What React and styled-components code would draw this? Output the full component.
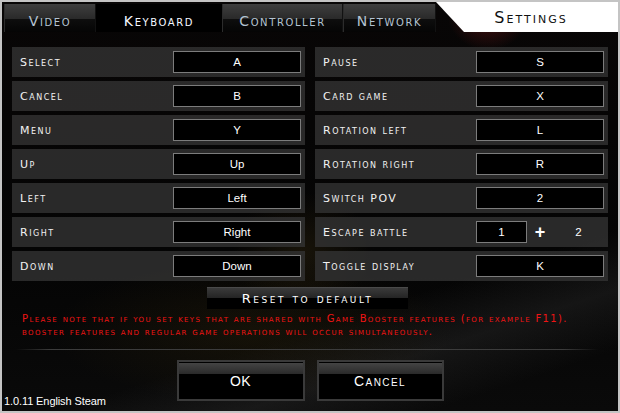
import React from "react";
import styled, { createGlobalStyle } from "styled-components";

const GlobalStyle = createGlobalStyle`
  html, body { margin: 0; padding: 0; background: #c4c4c4; }
  body { font-family: "DejaVu Sans", sans-serif; }
  *, *::before, *::after { box-sizing: border-box; }
`;

const Window = styled.div`
  width: 620px;
  height: 413px;
  border: 2px solid #c4c4c4;
  display: flex;
  flex-direction: column;
  overflow: hidden;
  background:
    radial-gradient(ellipse 40px 34px at 486px 14px, rgba(150, 30, 30, 0.45), transparent),
    radial-gradient(ellipse 70px 60px at 300px 250px, rgba(70, 55, 20, 0.3), transparent),
    radial-gradient(ellipse 200px 70px at 250px 330px, rgba(80, 60, 10, 0.2), transparent),
    linear-gradient(162deg, transparent 70%, rgba(60, 60, 60, 0.28) 80%, transparent 90%),
    linear-gradient(180deg, #080606, #040404 60%, #0a0a0a);
`;

const TabBar = styled.div`
  display: flex;
  height: 30px;
  flex: none;
  padding-left: 2px;
`;

const Tab = styled.div`
  width: ${(p) => p.$width}px;
  margin-top: 2px;
  display: flex;
  align-items: center;
  justify-content: center;
  padding-top: 5px;
  font-size: 14px;
  font-variant: small-caps;
  letter-spacing: 1.6px;
  color: ${(p) => (p.$active ? "#f4f8ff" : "#b4c3d2")};
  background: ${(p) =>
    p.$active
      ? "#000"
      : "linear-gradient(180deg, #3e3e3e 0%, #2a2a2a 52%, #0e0e0e 54%, #050505 100%)"};
  border-right: 1px solid ${(p) => (p.$active ? "#000" : "#121212")};
  border-left: 1px solid ${(p) => (p.$active ? "#000" : "#2c2c2c")};
`;

const Title = styled.div`
  flex: 1;
  display: flex;
  align-items: center;
  justify-content: center;
  padding-left: 8px;
  background: #fff;
  clip-path: polygon(0 0, 100% 0, 100% 100%, 28px 100%);
  color: #111;
  font-size: 16px;
  font-variant: small-caps;
  letter-spacing: 2px;
`;

const Grid = styled.div`
  display: grid;
  grid-template-columns: 1fr 1fr;
  grid-auto-rows: 30px;
  column-gap: 10px;
  row-gap: 4px;
  padding: 0 10px;
  margin-top: 15px;
  flex: none;
`;

const Row = styled.div`
  display: flex;
  align-items: center;
  justify-content: space-between;
  padding: 0 4px 0 8px;
  background: rgba(50, 50, 50, 0.82);
`;

const Label = styled.span`
  font-size: 11px;
  font-variant: small-caps;
  letter-spacing: 1.5px;
  color: #f2f2f2;
`;

const KeyBox = styled.div`
  width: ${(p) => p.$width || 128}px;
  height: 22px;
  border: 1px solid #7c7c7c;
  background: #000;
  display: flex;
  align-items: center;
  justify-content: center;
  font-family: "Liberation Sans", Arial, sans-serif;
  font-size: 11.5px;
  color: #fff;
`;

const Combo = styled.div`
  width: 128px;
  display: flex;
  align-items: center;
`;

const Plus = styled.span`
  width: 26px;
  text-align: center;
  font-family: "Liberation Sans", Arial, sans-serif;
  font-weight: bold;
  font-size: 18px;
  color: #fff;
`;

const ComboValue = styled.span`
  flex: 1;
  text-align: center;
  font-family: "Liberation Sans", Arial, sans-serif;
  font-size: 11.5px;
  color: #fff;
`;

const ResetWrap = styled.div`
  display: flex;
  justify-content: center;
  padding-right: 5px;
  margin-top: 6px;
  flex: none;
`;

const ResetButton = styled.button`
  width: 201px;
  height: 22px;
  padding: 0;
  border: none;
  border-top: 1px solid #4a4a4a;
  background: linear-gradient(180deg, #3a3a3a 0%, #242424 48%, #000 50%, #000 100%);
  color: #fff;
  font-family: "DejaVu Sans", sans-serif;
  font-size: 13px;
  font-variant: small-caps;
  letter-spacing: 2.5px;
  line-height: 20px;
`;

const Note = styled.p`
  margin: 3px 0 0;
  padding-left: 20px;
  flex: none;
  color: #f01414;
  font-size: 10px;
  line-height: 13px;
  font-variant: small-caps;
  letter-spacing: 1.35px;
`;

const Separator = styled.div`
  height: 1px;
  margin: 11px 20px 0 14px;
  flex: none;
  background: linear-gradient(90deg, transparent, #3c3c3c 6%, #3c3c3c 94%, transparent);
`;

const Footer = styled.div`
  flex: 1;
  margin-top: 10px;
  display: grid;
  grid-template-columns: 1fr auto 1fr;
`;

const Version = styled.span`
  align-self: end;
  padding: 0 0 4px 2px;
  font-family: "Liberation Sans", Arial, sans-serif;
  font-size: 11px;
  letter-spacing: -0.1px;
  color: #fff;
`;

const Buttons = styled.div`
  display: flex;
  gap: 12px;
  align-self: start;
`;

const DialogButton = styled.button`
  width: ${(p) => p.$width}px;
  height: 41px;
  padding: 0;
  border: 2px solid #3a3a3a;
  background:
    linear-gradient(180deg, #000 0, #000 1px, #444 1px, #2a2a2a 12px, #000 12px, #000 100%);
  color: #fff;
  font-family: "Liberation Sans", Arial, sans-serif;
  font-size: 14px;
  font-variant: small-caps;
  letter-spacing: ${(p) => p.$spacing}px;
`;

const left = [
  ["Select", "A"],
  ["Cancel", "B"],
  ["Menu", "Y"],
  ["Up", "Up"],
  ["Left", "Left"],
  ["Right", "Right"],
  ["Down", "Down"],
];

const right = [
  ["Pause", "S"],
  ["Card game", "X"],
  ["Rotation left", "L"],
  ["Rotation right", "R"],
  ["Switch POV", "2"],
  ["Escape battle", null],
  ["Toggle display", "K"],
];

const tabs = [
  ["Video", 92],
  ["Keyboard", 126, true],
  ["Controller", 121],
  ["Network", 93],
];

export default function App() {
  const rows = [];
  for (let i = 0; i < left.length; i++) {
    rows.push(
      <Row key={"l" + i}>
        <Label>{left[i][0]}</Label>
        <KeyBox>{left[i][1]}</KeyBox>
      </Row>
    );
    rows.push(
      <Row key={"r" + i}>
        <Label>{right[i][0]}</Label>
        {right[i][1] === null ? (
          <Combo>
            <KeyBox $width={51}>1</KeyBox>
            <Plus>+</Plus>
            <ComboValue>2</ComboValue>
          </Combo>
        ) : (
          <KeyBox>{right[i][1]}</KeyBox>
        )}
      </Row>
    );
  }

  return (
    <>
      <GlobalStyle />
      <Window>
        <TabBar>
          {tabs.map(([name, w, active]) => (
            <Tab key={name} $width={w} $active={active}>
              {name}
            </Tab>
          ))}
          <Title>Settings</Title>
        </TabBar>
        <Grid>{rows}</Grid>
        <ResetWrap>
          <ResetButton>Reset to default</ResetButton>
        </ResetWrap>
        <Note>
          Please note that if you set keys that are shared with Game Booster features (for example F11).
          <br />
          booster features and regular game operations will occur simultaneously.
        </Note>
        <Separator />
        <Footer>
          <Version>1.0.11 English Steam</Version>
          <Buttons>
            <DialogButton $width={128} $spacing={0.3}>OK</DialogButton>
            <DialogButton $width={127} $spacing={1.4}>Cancel</DialogButton>
          </Buttons>
        </Footer>
      </Window>
    </>
  );
}
